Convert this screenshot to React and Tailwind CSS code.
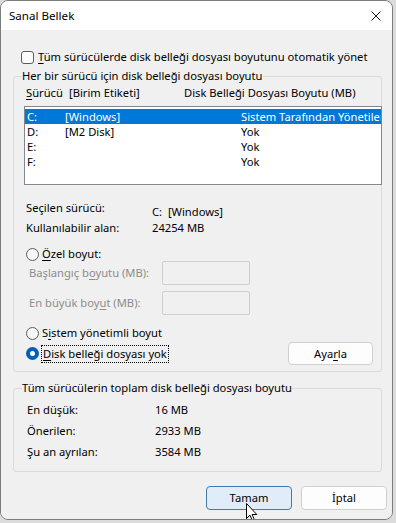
import React from 'react';

const font = { fontFamily: '"Noto Sans", "Liberation Sans", sans-serif' };

// Underlined access key letter
const U = ({ children }) => <span className="underline underline-offset-2">{children}</span>;

const Radio = ({ checked }) =>
  checked ? (
    <span className="flex h-[13px] w-[13px] shrink-0 items-center justify-center rounded-full bg-[#005fb8]">
      <span className="h-[5px] w-[5px] rounded-full bg-white" />
    </span>
  ) : (
    <span className="h-[13px] w-[13px] shrink-0 rounded-full border border-[#5c5c5c] bg-[#f7f7f7]" />
  );

const drives = [
  { d: 'C:', label: '[Windows]', size: 'Sistem Tarafından Yönetilen', selected: true },
  { d: 'D:', label: '[M2 Disk]', size: 'Yok' },
  { d: 'E:', label: '', size: 'Yok' },
  { d: 'F:', label: '', size: 'Yok' },
];

const totals = [
  ['En düşük:', '16 MB'],
  ['Önerilen:', '2933 MB'],
  ['Şu an ayrılan:', '3584 MB'],
];

export default function App() {
  return (
    <div className="h-[523px] w-[396px] bg-[#dcdcdc] text-[11.2px] text-black" style={font}>
      <div className="relative flex h-[520px] w-[393px] flex-col overflow-hidden rounded-[8px] border border-[#7c7c7c]">
        {/* title bar */}
        <div className="flex h-[29px] shrink-0 items-center justify-between bg-white pl-[8px] pr-[6px]">
          <span className="text-[11.6px] leading-[16px]">Sanal Bellek</span>
          <svg width="10" height="10" viewBox="0 0 10 10" className="mr-[5px]">
            <path d="M0.5 0.5 L9.5 9.5 M9.5 0.5 L0.5 9.5" stroke="#1a1a1a" strokeWidth="1" />
          </svg>
        </div>

        {/* body */}
        <div className="flex flex-1 flex-col bg-[#f0f0f0] pl-[12px]">
          <div className="mt-[19px] flex h-[16px] items-center gap-[4px] pl-[8px]">
            <span className="h-[13px] w-[13px] rounded-[3px] border border-[#5c5c5c] bg-[#fbfbfb]" />
            <span className="leading-[16px]">
              <U>T</U>üm sürücülerde disk belleği dosyası boyutunu otomatik yönet
            </span>
          </div>

          <fieldset className="mt-[3px] w-[369px] min-w-0 rounded-[3px] border border-[#dadada] pb-[6px] pl-[8px] pr-[8px]">
            <legend className="px-0 leading-[16px]">Her bir sürücü için disk belleği dosyası boyutu</legend>

            <div className="mt-[1px] flex h-[16px] items-center whitespace-nowrap pl-[4px] leading-[16px]">
              <span className="w-[43px] shrink-0"><U>S</U>ürücü</span>
              <span className="w-[115px] shrink-0">[Birim Etiketi]</span>
              <span>Disk Belleği Dosyası Boyutu (MB)</span>
            </div>

            <div className="ml-[2px] mt-[5px] h-[79px] w-[358px] overflow-hidden border border-[#828790] bg-white pt-[2px]">
              {drives.map((r) => (
                <div
                  key={r.d}
                  className={`flex h-[15px] items-center whitespace-nowrap leading-[14px] ${r.selected ? 'bg-[#0078d7] text-white' : ''}`}
                >
                  <span className="w-[40px] shrink-0 pl-[2px]">{r.d}</span>
                  <span className="w-[176px] shrink-0">{r.label}</span>
                  <span>{r.size}</span>
                </div>
              ))}
            </div>

            <div className="mt-[15px] flex h-[20px] pl-[4px] leading-[16px]">
              <span className="w-[126px] self-start">Seçilen sürücü:</span>
              <span className="self-end">C:&nbsp;&nbsp;[Windows]</span>
            </div>
            <div className="flex h-[16px] items-center pl-[4px] leading-[16px]">
              <span className="w-[126px]">Kullanılabilir alan:</span>
              <span>24254 MB</span>
            </div>

            <div className="mt-[11px] flex h-[14px] items-center gap-[3px] pl-[4px] leading-[16px]">
              <Radio />
              <span><U>Ö</U>zel boyut:</span>
            </div>

            <div className="flex h-[24px] items-center pl-[7px] text-[#8c8c8c]">
              <span className="w-[133px]">Başlangıç b<U>o</U>yutu (MB):</span>
              <span className="h-[24px] w-[88px] rounded-[2px] border border-[#cfcfcf]" />
            </div>
            <div className="mt-[6px] flex h-[24px] items-center pl-[7px] text-[#8c8c8c]">
              <span className="w-[133px]">En büyük boy<U>u</U>t (MB):</span>
              <span className="h-[24px] w-[88px] rounded-[2px] border border-[#cfcfcf]" />
            </div>

            <div className="mt-[10px] flex h-[16px] items-center gap-[3px] pl-[4px] leading-[16px]">
              <Radio />
              <span>S<U>i</U>stem yönetimli boyut</span>
            </div>

            <div className="mt-[1px] flex h-[23px] items-center justify-between pl-[4px]">
              <div className="flex items-center gap-[2px]">
                <Radio checked />
                <span className="border border-dotted border-black px-[1px] leading-[16px]">
                  <U>D</U>isk belleği dosyası yok
                </span>
              </div>
              <button className="h-[23px] w-[85px] rounded-[4px] border border-[#d0d0d0] bg-[#fdfdfd] leading-[16px]">
                Aya<U>r</U>la
              </button>
            </div>
          </fieldset>

          <fieldset className="mt-[8px] w-[369px] min-w-0 rounded-[3px] border border-[#dadada] pb-[8px] pl-[8px] pr-[8px]">
            <legend className="px-0 leading-[16px]">Tüm sürücülerin toplam disk belleği dosyası boyutu</legend>
            <div className="mt-[4px]">
              {totals.map(([k, v]) => (
                <div key={k} className="flex h-[21px] items-center pl-[5px]">
                  <span className="w-[128px]">{k}</span>
                  <span>{v}</span>
                </div>
              ))}
            </div>
          </fieldset>

          <div className="mt-[14px] flex justify-end gap-[9px] pr-[5px]">
            <button className="h-[24px] w-[86px] rounded-[4px] border border-[#3f7cae] bg-[#e0ecf8] leading-[16px]">
              Tamam
            </button>
            <button className="h-[24px] w-[86px] rounded-[4px] border border-[#d0d0d0] bg-[#fdfdfd] leading-[16px]">
              İptal
            </button>
          </div>
        </div>

        {/* mouse pointer over the Tamam button */}
        <svg width="12" height="19" viewBox="0 0 12 19" className="absolute left-[245px] top-[502px]">
          <path d="M0.5 0.5 L0.5 15.5 L4 12.2 L6.6 18 L8.6 17.1 L6.1 11.5 L10.8 11.5 Z" fill="white" stroke="black" strokeWidth="1" strokeLinejoin="round" />
        </svg>
      </div>
    </div>
  );
}
